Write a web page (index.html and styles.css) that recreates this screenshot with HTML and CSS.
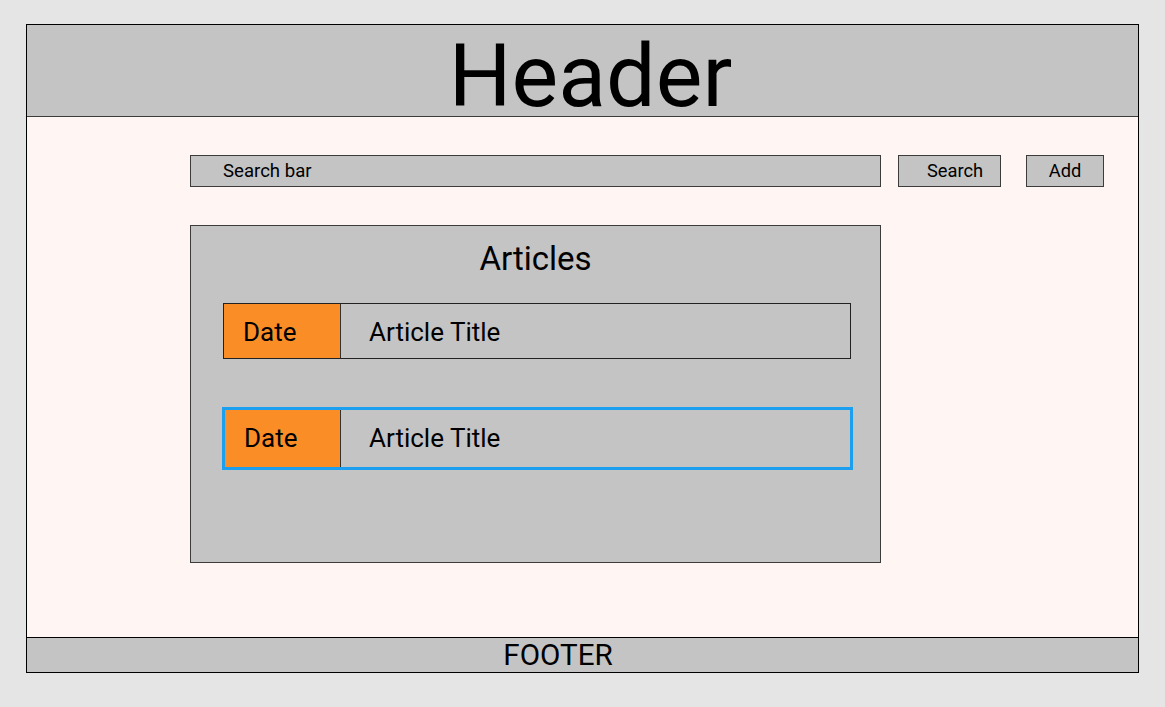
FILE: index.html
```html
<!DOCTYPE html>
<html lang="en">
<head>
  <meta charset="UTF-8">
  <meta name="viewport" content="width=device-width, initial-scale=1.0">
  <title>Articles</title>
  <link rel="stylesheet" href="styles.css">
</head>
<body>
  <div class="frame">
    <header class="page-header">Header</header>

    <main class="page-main">
      <div class="search-row">
        <div class="search-bar">Search bar</div>
        <button class="btn btn-search">Search</button>
        <button class="btn btn-add">Add</button>
      </div>

      <section class="articles">
        <h2 class="articles-title">Articles</h2>
        <div class="article-row">
          <div class="article-date">Date</div>
          <div class="article-name">Article Title</div>
        </div>
        <div class="article-row active">
          <div class="article-date">Date</div>
          <div class="article-name">Article Title</div>
        </div>
      </section>
    </main>

    <footer class="page-footer">FOOTER</footer>
  </div>
</body>
</html>
```

FILE: styles.css
```css
* {
  box-sizing: border-box;
}

body {
  margin: 0;
  padding: 24px 26px 0 26px;
  background: #e5e5e5;
  font-family: Roboto, "Liberation Sans", sans-serif;
  color: #000;
}

.frame {
  width: 1113px;
  height: 649px;
  border: 1px solid #000;
  background: #fff6f4;
  display: flex;
  flex-direction: column;
}

.page-header {
  height: 92px;
  padding: 10px 0 0 16px;
  background: #c4c4c4;
  border-bottom: 1px solid #3c3c3c;
  font-size: 88px;
  line-height: 81px;
  text-align: center;
}

.page-main {
  flex: 1;
  padding: 38px 0 0 163px;
}

.search-row {
  display: flex;
  align-items: flex-start;
}

.search-bar {
  width: 691px;
  height: 32px;
  padding-left: 32px;
  background: #c4c4c4;
  border: 1px solid #3c3c3c;
  font-size: 18.6px;
  line-height: 31px;
}

.btn {
  height: 32px;
  padding: 0;
  background: #c4c4c4;
  border: 1px solid #3c3c3c;
  border-radius: 0;
  font-family: inherit;
  font-size: 18.3px;
  line-height: 30px;
  color: #000;
}

.btn-search {
  width: 103px;
  margin-left: 17px;
  padding-left: 28px;
  text-align: left;
}

.btn-add {
  width: 78px;
  margin-left: 25px;
}

.articles {
  width: 691px;
  height: 338px;
  margin-top: 38px;
  padding: 14px 0 0 32px;
  background: #c4c4c4;
  border: 1px solid #3c3c3c;
}

.articles-title {
  margin: 0 0 0 -32px;
  font-size: 33px;
  font-weight: 400;
  line-height: 38px;
  text-align: center;
}

.article-row {
  width: 628px;
  height: 56px;
  margin-top: 25px;
  display: grid;
  grid-template-columns: 117px 1fr;
  border: 1px solid #222;
  overflow: hidden;
  font-size: 26px;
  line-height: 57px;
}

.article-row.active {
  width: 631px;
  height: 63px;
  margin: 48px 0 0 -1px;
  grid-template-columns: 116px 1fr;
  border: 3px solid #1d9ff0;
  line-height: 57px;
}

.article-date {
  padding-left: 19px;
  background: #fb8d27;
  border-right: 1px solid #333;
}

.article-name {
  padding-left: 28px;
}

.page-footer {
  height: 35px;
  padding-right: 49px;
  background: #c4c4c4;
  border-top: 1px solid #000;
  font-size: 29.6px;
  line-height: 34px;
  text-align: center;
}
```
